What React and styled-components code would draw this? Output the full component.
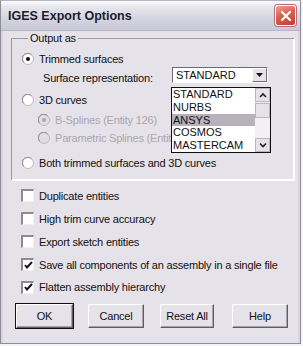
import React from "react";
import styled, { createGlobalStyle } from "styled-components";

const Global = createGlobalStyle`
  body {
    margin: 0;
    background: #f4f3f6;
    font-family: "Liberation Sans", Arial, sans-serif;
  }
`;

const Dialog = styled.div`
  width: 301px;
  height: 344px;
  box-sizing: border-box;
  border: 1px solid #8c8b96;
  border-top-color: #b6b5c0;
  background: #e6e2ea;
  display: flex;
  flex-direction: column;
`;

const TitleBar = styled.div`
  height: 29px;
  display: flex;
  align-items: center;
  justify-content: space-between;
  padding: 0 4px 0 6px;
  background: linear-gradient(180deg, #fbfbfd 0%, #e6e6ee 20%, #d6d6e2 60%, #c8c8d6 100%);
  border-bottom: 1px solid #b8b6c4;
  flex-shrink: 0;
`;

const Title = styled.div`
  font-weight: bold;
  font-size: 12.5px;
  color: #1c1c2c;
  padding-left: 1px;
`;

const CloseBtn = styled.div`
  width: 19px;
  height: 19px;
  border-radius: 3px;
  border: 1px solid #ffffff;
  box-shadow: 0 0 0 1px #b0707a;
  background: linear-gradient(160deg, #f0a090 0%, #d86050 45%, #c04030 100%);
  display: flex;
  align-items: center;
  justify-content: center;
`;

const Body = styled.div`
  flex: 1;
  padding: 1px 3px 0 8px;
  border-left: 2px solid #d8d6e0;
  border-right: 2px solid #d8d6e0;
  font-size: 11px;
  letter-spacing: -0.2px;
`;

const Group = styled.fieldset`
  margin: 0;
  width: 283px;
  box-sizing: border-box;
  height: 148px;
  padding: 6px 0 0 11px;
  border: none;
  box-shadow: inset 1px 1px 0 #9c9aa6, inset -1px -1px 0 #ffffff, 1px 1px 0 #ffffff;
  position: relative;
`;

const Legend = styled.legend`
  color: #111;
  padding: 0 2px;
  margin-left: 6px;
  background: #e6e2ea;
  line-height: 12px;
`;

const Row = styled.div`
  display: flex;
  align-items: center;
  height: ${(p) => p.h || 20}px;
  padding-left: ${(p) => p.indent || 0}px;
  color: ${(p) => (p.disabled ? "#a9a6b0" : "#111")};
  white-space: nowrap;
  gap: 5px;
`;

const Label = styled.span`
  line-height: 14px;
`;

const Radio = ({ checked, disabled }) => (
  <svg width="12" height="12" viewBox="0 0 12 12" style={{ flexShrink: 0 }}>
    <circle cx="6" cy="6" r="5.5" fill={disabled ? "#e0dde4" : "#ffffff"} stroke="#bcb9c4" />
    <path d="M1.8 9.5 A5 5 0 0 1 9.5 1.8" fill="none" stroke="#8a8892" strokeWidth="1" />
    {checked && <circle cx="6" cy="6" r="2" fill={disabled ? "#a9a6b0" : "#111"} />}
  </svg>
);

const CheckBox = styled.div`
  width: 13px;
  height: 13px;
  box-sizing: border-box;
  background: #fff;
  border-top: 2px solid #8d8a96;
  border-left: 2px solid #8d8a96;
  border-right: 1px solid #f0eef4;
  border-bottom: 1px solid #f0eef4;
  display: flex;
  align-items: center;
  justify-content: center;
  flex-shrink: 0;
`;

const Check = ({ checked }) => (
  <CheckBox>
    {checked && (
      <svg width="9" height="9" viewBox="0 0 9 9">
        <path d="M1 4 L3 6.5 L8 1" fill="none" stroke="#111" strokeWidth="2" />
      </svg>
    )}
  </CheckBox>
);

const Select = styled.div`
  position: absolute;
  left: 161px;
  top: 23px;
  width: 96px;
  height: 16px;
  box-sizing: border-box;
  background: #fff;
  border-top: 1px solid #6c6a74;
  border-left: 1px solid #6c6a74;
  border-right: 1px solid #fff;
  border-bottom: 1px solid #fff;
  display: flex;
  align-items: center;
  padding-left: 3px;
  color: #111;
  letter-spacing: 0;
`;

const SelectText = styled.span`
  flex: 1;
`;

const ArrowBtn = styled.div`
  width: 15px;
  height: 14px;
  box-sizing: border-box;
  background: #e6e2ea;
  border-top: 1px solid #fff;
  border-left: 1px solid #fff;
  border-right: 1px solid #6c6a74;
  border-bottom: 1px solid #6c6a74;
  display: flex;
  align-items: center;
  justify-content: center;
`;

const ListBox = styled.div`
  position: absolute;
  left: 160px;
  top: 43px;
  width: 100px;
  height: 66px;
  box-sizing: border-box;
  background: #fff;
  border: 1px solid #111;
  display: flex;
  z-index: 2;
`;

const Items = styled.div`
  flex: 1;
  display: flex;
  flex-direction: column;
`;

const Item = styled.div`
  height: 12.8px;
  line-height: 13px;
  padding-left: 1px;
  color: #111;
  letter-spacing: 0;
  background: ${(p) => (p.selected ? "#b6b2bc" : "transparent")};
`;

const ScrollBar = styled.div`
  width: 15px;
  display: flex;
  flex-direction: column;
  background: #f2f0f4;
`;

const ScrollBtn = styled.div`
  height: 14px;
  box-sizing: border-box;
  background: #e6e2ea;
  border: 1px solid #b8b5c0;
  display: flex;
  align-items: center;
  justify-content: center;
  margin-top: ${(p) => p.mt || 0}px;
`;

const Thumb = styled.div`
  height: 15px;
  box-sizing: border-box;
  margin-top: 1px;
  background: #e6e2ea;
  border: 1px solid #b8b5c0;
`;

const Checks = styled.div`
  display: flex;
  flex-direction: column;
  padding: 4px 0 0 10px;
`;

const Buttons = styled.div`
  display: flex;
  padding: 6px 0 0 5px;
`;

const Button = styled.div`
  width: ${(p) => p.w}px;
  height: 24px;
  margin-right: ${(p) => p.mr || 0}px;
  box-sizing: border-box;
  background: #e6e2ea;
  color: #111;
  display: flex;
  align-items: center;
  justify-content: center;
  border-top: 1px solid #fff;
  border-left: 1px solid #fff;
  border-right: 1px solid #5e5c66;
  border-bottom: 1px solid #5e5c66;
  box-shadow: inset -1px -1px 0 #a6a3ae;
  outline: ${(p) => (p.primary ? "1px solid #111" : "none")};
`;

const Chevron = ({ up }) => (
  <svg width="8" height="6" viewBox="0 0 8 6">
    <path d={up ? "M1 5 L4 2 L7 5" : "M1 1.5 L4 4.5 L7 1.5"} fill="none" stroke="#222" strokeWidth="1.6" />
  </svg>
);

export default function App() {
  return (
    <>
      <Global />
      <Dialog>
        <TitleBar>
          <Title>IGES Export Options</Title>
          <CloseBtn>
            <svg width="12" height="12" viewBox="0 0 12 12">
              <path d="M2 2 L10 10 M10 2 L2 10" stroke="#fff" strokeWidth="2.2" strokeLinecap="round" />
            </svg>
          </CloseBtn>
        </TitleBar>
        <Body>
          <Group>
            <Legend>Output as</Legend>
            <Row h={18}>
              <Radio checked />
              <Label>Trimmed surfaces</Label>
            </Row>
            <Row h={20} indent={21}>
              <Label>Surface representation:</Label>
            </Row>
            <Row h={24}>
              <Radio />
              <Label>3D curves</Label>
            </Row>
            <Row h={16} indent={16} disabled>
              <Radio checked disabled />
              <Label>B-Splines (Entity 126)</Label>
            </Row>
            <Row h={20} indent={16} disabled>
              <Radio disabled />
              <Label>Parametric Splines (Entity 112)</Label>
            </Row>
            <Row h={30}>
              <Radio />
              <Label>Both trimmed surfaces and 3D curves</Label>
            </Row>
            <Select>
              <SelectText>STANDARD</SelectText>
              <ArrowBtn>
                <svg width="7" height="4" viewBox="0 0 7 4">
                  <path d="M0 0 H7 L3.5 4 Z" fill="#111" />
                </svg>
              </ArrowBtn>
            </Select>
            <ListBox>
              <Items>
                <Item>STANDARD</Item>
                <Item>NURBS</Item>
                <Item selected>ANSYS</Item>
                <Item>COSMOS</Item>
                <Item>MASTERCAM</Item>
              </Items>
              <ScrollBar>
                <ScrollBtn>
                  <Chevron up />
                </ScrollBtn>
                <Thumb />
                <ScrollBtn mt={20}>
                  <Chevron />
                </ScrollBtn>
              </ScrollBar>
            </ListBox>
          </Group>
          <Checks>
            <Row h={23}>
              <Check />
              <Label>Duplicate entities</Label>
            </Row>
            <Row h={23}>
              <Check />
              <Label>High trim curve accuracy</Label>
            </Row>
            <Row h={23}>
              <Check />
              <Label>Export sketch entities</Label>
            </Row>
            <Row h={23}>
              <Check checked />
              <Label>Save all components of an assembly in a single file</Label>
            </Row>
            <Row h={22}>
              <Check checked />
              <Label>Flatten assembly hierarchy</Label>
            </Row>
          </Checks>
          <Buttons>
            <Button w={57} mr={15} primary>OK</Button>
            <Button w={56} mr={16}>Cancel</Button>
            <Button w={54} mr={18}>Reset All</Button>
            <Button w={56}>Help</Button>
          </Buttons>
        </Body>
      </Dialog>
    </>
  );
}
